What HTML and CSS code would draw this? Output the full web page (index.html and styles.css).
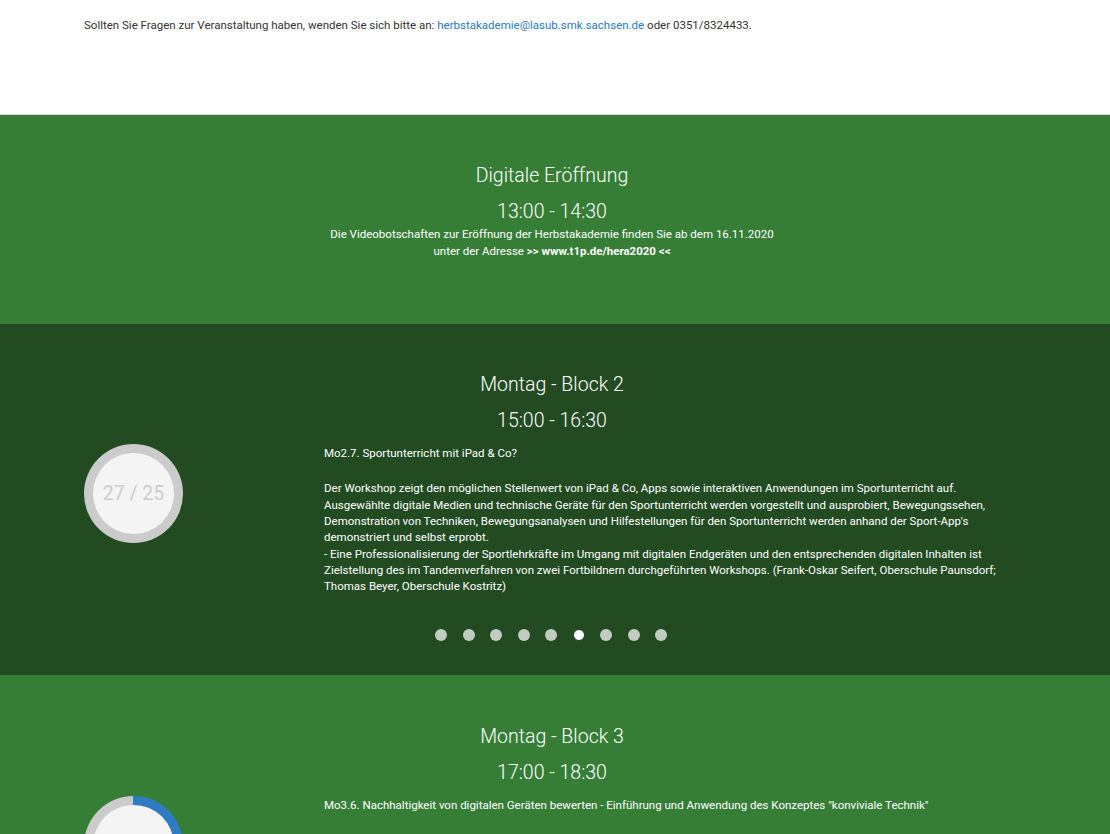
FILE: index.html
```html
<!DOCTYPE html>
<html lang="de">
<head>
<meta charset="utf-8">
<title>Herbstakademie</title>
<link rel="stylesheet" href="styles.css">
</head>
<body>
<div class="intro">
  <p>Sollten Sie Fragen zur Veranstaltung haben, wenden Sie sich bitte an: <a href="#">herbstakademie@lasub.smk.sachsen.de</a> oder 0351/8324433.</p>
</div>

<section class="block block-light block-first">
  <h2 class="block-title">Digitale Eröffnung</h2>
  <div class="block-time">13:00 - 14:30</div>
  <p class="block-desc">Die Videobotschaften zur Eröffnung der Herbstakademie finden Sie ab dem 16.11.2020<br>unter der Adresse <strong>&gt;&gt; www.t1p.de/hera2020 &lt;&lt;</strong></p>
</section>

<section class="block block-dark">
  <h2 class="block-title">Montag - Block 2</h2>
  <div class="block-time">15:00 - 16:30</div>
  <div class="row">
    <div class="side">
      <div class="gauge gauge-full"><div class="gauge-inner">27 / 25</div></div>
    </div>
    <div class="content">
      <p class="ws-title">Mo2.7. Sportunterricht mit iPad &amp; Co?</p>
      <p class="ws-text">Der Workshop zeigt den möglichen Stellenwert von iPad &amp; Co, Apps sowie interaktiven Anwendungen im Sportunterricht auf.<br>Ausgewählte digitale Medien und technische Geräte für den Sportunterricht werden vorgestellt und ausprobiert, Bewegungssehen, Demonstration von Techniken, Bewegungsanalysen und Hilfestellungen für den Sportunterricht werden anhand der Sport-App's demonstriert und selbst erprobt.<br>- Eine Professionalisierung der Sportlehrkräfte im Umgang mit digitalen Endgeräten und den entsprechenden digitalen Inhalten ist Zielstellung des im Tandemverfahren von zwei Fortbildnern durchgeführten Workshops. (Frank-Oskar Seifert, Oberschule Paunsdorf; Thomas Beyer, Oberschule Kostritz)</p>
    </div>
  </div>
  <div class="dots">
    <span class="dot"></span><span class="dot"></span><span class="dot"></span><span class="dot"></span><span class="dot"></span><span class="dot dot-active"></span><span class="dot"></span><span class="dot"></span><span class="dot"></span>
  </div>
</section>

<section class="block block-light block-last">
  <h2 class="block-title">Montag - Block 3</h2>
  <div class="block-time">17:00 - 18:30</div>
  <div class="row">
    <div class="side">
      <div class="gauge gauge-part"><div class="gauge-inner">14 / 25</div></div>
    </div>
    <div class="content">
      <p class="ws-title">Mo3.6. Nachhaltigkeit von digitalen Geräten bewerten - Einführung und Anwendung des Konzeptes "konviviale Technik"</p>
      <p class="ws-text">Der Workshop stellt das Konzept der konvivialen Technik vor und erprobt seine Anwendung an digitalen Geräten aus dem Schulalltag.</p>
    </div>
  </div>
</section>
</body>
</html>
```

FILE: styles.css
```css
html, body {
  margin: 0;
  padding: 0;
  background: #fff;
  font-family: Roboto, "Liberation Sans", Arial, sans-serif;
}

.intro {
  height: 114px;
  padding: 0 84px;
  box-sizing: border-box;
}

.intro p {
  margin: 0;
  padding-top: 17px;
  font-size: 11.5px;
  line-height: 17px;
  color: #333;
}

.intro a {
  color: #2a7ac0;
  text-decoration: none;
}

.block {
  color: #fff;
  padding: 49px 90px 0 84px;
  text-align: center;
}

.block-light {
  background: #367e36;
}

.block-dark {
  background: #224b22;
  padding-bottom: 34px;
}

.block-first {
  border-top: 1px solid #dcdcdc;
  padding-bottom: 64px;
}

.block-last {
  padding-top: 50px;
  padding-bottom: 40px;
}

.block-title {
  margin: 0 0 12px;
  font-size: 19.5px;
  font-weight: 300;
  line-height: 24px;
}

.block-time {
  font-size: 19.5px;
  font-weight: 300;
  line-height: 24px;
}

.block-desc {
  margin: 2px 0 0;
  font-size: 11.5px;
  font-weight: 400;
  line-height: 17px;
}

.block-desc strong {
  font-weight: 700;
}

.row {
  display: flex;
  align-items: flex-start;
  margin-top: 12px;
  text-align: left;
}

.side {
  width: 240px;
  flex: none;
  margin-top: -1px;
}

.content {
  flex: 1;
  padding-right: 20px;
}

.ws-title {
  margin: 0 0 19px;
  font-size: 11.5px;
  line-height: 16.33px;
}

.ws-text {
  margin: 0;
  font-size: 11.5px;
  line-height: 16.33px;
}

.gauge {
  width: 99px;
  height: 99px;
  border-radius: 50%;
  display: flex;
  align-items: center;
  justify-content: center;
}

.gauge-full {
  background: #cbcbcb;
}

.gauge-part {
  background: conic-gradient(#2f7bc4 0 56%, #cbcbcb 56% 100%);
}

.gauge-inner {
  width: 81px;
  height: 81px;
  border-radius: 50%;
  background: #f4f4f4;
  color: #cdcdcd;
  font-size: 19.5px;
  font-weight: 400;
  display: flex;
  align-items: center;
  justify-content: center;
}

.dots {
  display: flex;
  justify-content: center;
  gap: 15.5px;
  margin-top: 34px;
  padding-right: 2px;
}

.dot {
  width: 12px;
  height: 12px;
  border-radius: 50%;
  background: #c1cbc0;
  box-sizing: border-box;
}

.dot-active {
  background: #fff;
  border: 1.5px solid #2b3340;
}
```
